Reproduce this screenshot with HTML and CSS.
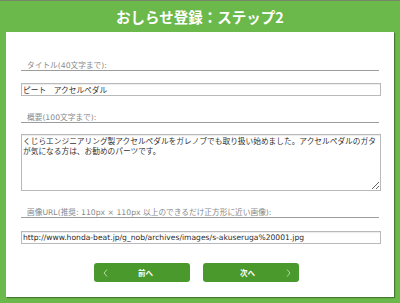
FILE: index.html
```html
<!DOCTYPE html>
<html lang="ja">
<head>
<meta charset="utf-8">
<title>おしらせ登録：ステップ2</title>
<link rel="stylesheet" href="styles.css">
</head>
<body>
<header class="header">
  <h1 class="title">おしらせ登録：ステップ2</h1>
</header>
<main class="panel">
  <form class="form">
    <label class="label" for="title">タイトル(40文字まで):</label>
    <input class="field" id="title" type="text" value="ピート　アクセルペダル">

    <label class="label label-next" for="summary">概要(100文字まで):</label>
    <textarea class="area" id="summary">くじらエンジニアリング製アクセルペダルをガレノブでも取り扱い始めました。アクセルペダルのガタが気になる方は、お勧めのパーツです。</textarea>

    <label class="label label-next" for="image">画像URL(推奨: 110px × 110px 以上のできるだけ正方形に近い画像):</label>
    <input class="field field-url" id="image" type="text" value="http://www.honda-beat.jp/g_nob/archives/images/s-akuseruga%20001.jpg">

    <div class="buttons">
      <button type="button" class="btn btn-prev">
        <svg class="chev" width="5" height="8" viewBox="0 0 5 8"><polyline points="4,0.5 1,4 4,7.5" fill="none" stroke="currentColor" stroke-width="1"/></svg>
        <span class="btn-text">前へ</span>
        <span></span>
      </button>
      <button type="button" class="btn btn-next">
        <span></span>
        <span class="btn-text">次へ</span>
        <svg class="chev" width="5" height="8" viewBox="0 0 5 8"><polyline points="1,0.5 4,4 1,7.5" fill="none" stroke="currentColor" stroke-width="1"/></svg>
      </button>
    </div>
  </form>
</main>
</body>
</html>
```

FILE: styles.css
```css
html, body {
  margin: 0;
  padding: 0;
}
body {
  width: 400px;
  height: 303px;
  overflow: hidden;
  background: #6bb84b;
  border-top: 1px solid #74856a;
  box-sizing: border-box;
  font-family: "DejaVu Sans", "Noto Sans CJK JP", sans-serif;
}
.header {
  height: 31px;
  display: flex;
  align-items: center;
  justify-content: center;
}
.title {
  margin: 0;
  padding-top: 1px;
  font-family: "Noto Sans CJK JP", sans-serif;
  font-size: 14.5px;
  font-weight: 700;
  color: #ffffff;
  line-height: 1;
}
.panel {
  margin: 0 6px;
  height: 265px;
  box-sizing: border-box;
  background: #ffffff;
  box-shadow: 1px 1px 1px rgba(0, 0, 0, 0.35);
  padding: 29px 0 0 15px;
}
.form {
  display: flex;
  flex-direction: column;
  width: 360px;
}
.label {
  display: block;
  width: 358px;
  height: 10px;
  box-sizing: border-box;
  padding-left: 6px;
  border-bottom: 1px solid #9c9c9c;
  font-family: "DejaVu Sans", "Noto Sans CJK JP", sans-serif;
  font-size: 7.7px;
  line-height: 9px;
  color: #8a8a8a;
  white-space: nowrap;
}
.label-next {
  margin-top: 17px;
}
.field {
  display: block;
  margin: 12px 0 0;
  width: 360px;
  height: 13px;
  box-sizing: border-box;
  padding: 0 1px;
  border: 1px solid #b9b9b9;
  box-shadow: inset 0 1px 1px rgba(0, 0, 0, 0.08);
  outline: none;
  font-family: "DejaVu Sans", "Noto Sans CJK JP", sans-serif;
  font-size: 7.7px;
  color: #333333;
  background: #ffffff;
}
.field-url {
  margin-top: 13px;
  font-size: 7.6px;
  color: #2a2a2a;
}
.area {
  display: block;
  margin: 11px 0 0;
  width: 360px;
  height: 57px;
  box-sizing: border-box;
  padding: 1.5px 1px;
  border: 1px solid #b9b9b9;
  box-shadow: inset 0 1px 1px rgba(0, 0, 0, 0.08);
  outline: none;
  font-family: "DejaVu Sans", "Noto Sans CJK JP", sans-serif;
  font-size: 7.7px;
  line-height: 10.6px;
  color: #333333;
  overflow: hidden;
}
.buttons {
  margin-top: 19px;
  display: flex;
  justify-content: center;
  gap: 13px;
  padding-right: 9px;
}
.btn {
  width: 96px;
  height: 19px;
  padding: 0;
  border: none;
  border-radius: 3px;
  background: #4a992d;
  color: #ffffff;
  display: grid;
  align-items: center;
  justify-items: center;
  font-family: "Noto Sans CJK JP", sans-serif;
  font-size: 7.5px;
  font-weight: 700;
}
.btn-prev {
  grid-template-columns: 22px 1fr 15px;
}
.btn-next {
  grid-template-columns: 15px 1fr 22px;
}
.chev {
  color: rgba(255, 255, 255, 0.6);
  display: block;
}
.btn-text {
  line-height: 1;
}
```
